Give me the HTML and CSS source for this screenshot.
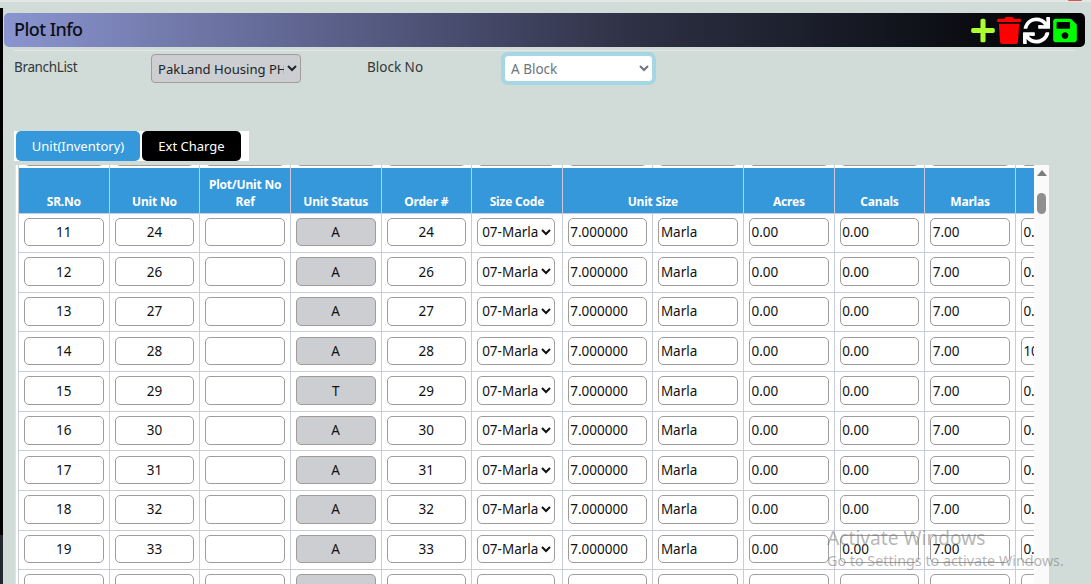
FILE: index.html
```html
<!DOCTYPE html>
<html lang="en">
<head>
<meta charset="utf-8">
<title>Plot Info</title>
<link rel="stylesheet" href="styles.css">
</head>
<body>
<div class="top-edge"><span class="top-dot"></span></div>
<div class="shell">
  <div class="edge"></div>
  <main class="main">
    <header class="title-bar">
      <h1 class="title">Plot Info</h1>
      <div class="tools">
        <svg class="ico ico-plus" viewBox="0 0 448 512"><path d="M416 208H272V64c0-17.67-14.33-32-32-32h-32c-17.67 0-32 14.33-32 32v144H32c-17.67 0-32 14.33-32 32v32c0 17.67 14.33 32 32 32h144v144c0 17.67 14.33 32 32 32h32c17.67 0 32-14.33 32-32V304h144c17.67 0 32-14.33 32-32v-32c0-17.67-14.33-32-32-32z"/></svg>
        <svg class="ico ico-trash" viewBox="0 0 448 512"><path d="M432 32H312l-9.4-18.7A24 24 0 0 0 281.1 0H166.8a23.72 23.72 0 0 0-21.4 13.3L136 32H16A16 16 0 0 0 0 48v32a16 16 0 0 0 16 16h416a16 16 0 0 0 16-16V48a16 16 0 0 0-16-16zM53.2 467a48 48 0 0 0 47.9 45h245.8a48 48 0 0 0 47.9-45L416 128H32z"/></svg>
        <svg class="ico ico-sync" viewBox="0 0 512 512"><path d="M440.65 12.57l4 82.77A247.16 247.16 0 0 0 255.83 8C134.73 8 33.91 94.92 12.29 209.82A12 12 0 0 0 24.09 224h49.05a12 12 0 0 0 11.67-9.26 175.91 175.91 0 0 1 317-56.94l-101.46-4.86a12 12 0 0 0-12.57 12v47.41a12 12 0 0 0 12 12H500a12 12 0 0 0 12-12V12a12 12 0 0 0-12-12h-47.37a12 12 0 0 0-11.98 12.57zM255.83 432a175.61 175.61 0 0 1-146-77.8l101.8 4.87a12 12 0 0 0 12.57-12v-47.4a12 12 0 0 0-12-12H12a12 12 0 0 0-12 12V500a12 12 0 0 0 12 12h47.35a12 12 0 0 0 12-12.6l-4.15-82.57A247.17 247.17 0 0 0 255.83 504c121.11 0 221.93-86.92 243.55-201.82a12 12 0 0 0-11.8-14.18h-49.05a12 12 0 0 0-11.67 9.26A175.86 175.86 0 0 1 255.83 432z"/></svg>
        <svg class="ico ico-save" viewBox="0 0 448 512"><path d="M433.941 129.941l-83.882-83.882A48 48 0 0 0 316.118 32H48C21.49 32 0 53.49 0 80v352c0 26.51 21.49 48 48 48h352c26.51 0 48-21.49 48-48V163.882a48 48 0 0 0-14.059-33.941zM224 416c-35.346 0-64-28.654-64-64 0-35.346 28.654-64 64-64s64 28.654 64 64c0 35.346-28.654 64-64 64zm96-304.52V212c0 6.627-5.373 12-12 12H76c-6.627 0-12-5.373-12-12V108c0-6.627 5.373-12 12-12h228.52c3.183 0 6.235 1.264 8.485 3.515l3.48 3.48A11.996 11.996 0 0 1 320 111.48z"/></svg>
      </div>
    </header>
    <hr class="rule">
    <section class="filters">
      <label class="lbl lbl-branch">BranchList</label>
      <select class="branch-select"><option>PakLand Housing PH-1</option></select>
      <label class="lbl lbl-block">Block No</label>
      <select class="block-select"><option>A Block</option></select>
    </section>
    <nav class="tabs">
      <button class="tab tab-active">Unit(Inventory)</button>
      <button class="tab tab-dark">Ext Charge</button>
    </nav>
    <section class="panel">
      <div class="view">
        <table class="grid">
          <colgroup><col class="c"><col class="c"><col class="c"><col class="c"><col class="c"><col class="c"><col class="c"><col class="c"><col class="c"><col class="c"><col class="c"><col class="c"></colgroup>
          <tbody>
            <tr class="row cut"><td><input class="f ctr"></td><td><input class="f ctr"></td><td><input class="f ctr"></td><td><input class="f ctr st"></td><td><input class="f ctr"></td><td><input class="f sz"></td><td><input class="f"></td><td><input class="f"></td><td><input class="f"></td><td><input class="f"></td><td><input class="f"></td><td><input class="f"></td></tr>
            <tr class="head"><th>SR.No</th><th>Unit No</th><th>Plot/Unit No<br>Ref</th><th>Unit Status</th><th>Order #</th><th>Size Code</th><th colspan="2">Unit Size</th><th>Acres</th><th>Canals</th><th>Marlas</th><th>Square Ft</th></tr>
            <tr class="row"><td><input class="f ctr" value="11"></td><td><input class="f ctr" value="24"></td><td><input class="f ctr"></td><td><input class="f ctr st" value="A"></td><td><input class="f ctr" value="24"></td><td><select class="f sz"><option>07-Marla</option></select></td><td><input class="f" value="7.000000"></td><td><input class="f" value="Marla"></td><td><input class="f" value="0.00"></td><td><input class="f" value="0.00"></td><td><input class="f" value="7.00"></td><td><input class="f" value="0.00"></td></tr>
            <tr class="row"><td><input class="f ctr" value="12"></td><td><input class="f ctr" value="26"></td><td><input class="f ctr"></td><td><input class="f ctr st" value="A"></td><td><input class="f ctr" value="26"></td><td><select class="f sz"><option>07-Marla</option></select></td><td><input class="f" value="7.000000"></td><td><input class="f" value="Marla"></td><td><input class="f" value="0.00"></td><td><input class="f" value="0.00"></td><td><input class="f" value="7.00"></td><td><input class="f" value="0.00"></td></tr>
            <tr class="row"><td><input class="f ctr" value="13"></td><td><input class="f ctr" value="27"></td><td><input class="f ctr"></td><td><input class="f ctr st" value="A"></td><td><input class="f ctr" value="27"></td><td><select class="f sz"><option>07-Marla</option></select></td><td><input class="f" value="7.000000"></td><td><input class="f" value="Marla"></td><td><input class="f" value="0.00"></td><td><input class="f" value="0.00"></td><td><input class="f" value="7.00"></td><td><input class="f" value="0.00"></td></tr>
            <tr class="row"><td><input class="f ctr" value="14"></td><td><input class="f ctr" value="28"></td><td><input class="f ctr"></td><td><input class="f ctr st" value="A"></td><td><input class="f ctr" value="28"></td><td><select class="f sz"><option>07-Marla</option></select></td><td><input class="f" value="7.000000"></td><td><input class="f" value="Marla"></td><td><input class="f" value="0.00"></td><td><input class="f" value="0.00"></td><td><input class="f" value="7.00"></td><td><input class="f" value="10.00"></td></tr>
            <tr class="row"><td><input class="f ctr" value="15"></td><td><input class="f ctr" value="29"></td><td><input class="f ctr"></td><td><input class="f ctr st" value="T"></td><td><input class="f ctr" value="29"></td><td><select class="f sz"><option>07-Marla</option></select></td><td><input class="f" value="7.000000"></td><td><input class="f" value="Marla"></td><td><input class="f" value="0.00"></td><td><input class="f" value="0.00"></td><td><input class="f" value="7.00"></td><td><input class="f" value="0.00"></td></tr>
            <tr class="row"><td><input class="f ctr" value="16"></td><td><input class="f ctr" value="30"></td><td><input class="f ctr"></td><td><input class="f ctr st" value="A"></td><td><input class="f ctr" value="30"></td><td><select class="f sz"><option>07-Marla</option></select></td><td><input class="f" value="7.000000"></td><td><input class="f" value="Marla"></td><td><input class="f" value="0.00"></td><td><input class="f" value="0.00"></td><td><input class="f" value="7.00"></td><td><input class="f" value="0.00"></td></tr>
            <tr class="row"><td><input class="f ctr" value="17"></td><td><input class="f ctr" value="31"></td><td><input class="f ctr"></td><td><input class="f ctr st" value="A"></td><td><input class="f ctr" value="31"></td><td><select class="f sz"><option>07-Marla</option></select></td><td><input class="f" value="7.000000"></td><td><input class="f" value="Marla"></td><td><input class="f" value="0.00"></td><td><input class="f" value="0.00"></td><td><input class="f" value="7.00"></td><td><input class="f" value="0.00"></td></tr>
            <tr class="row"><td><input class="f ctr" value="18"></td><td><input class="f ctr" value="32"></td><td><input class="f ctr"></td><td><input class="f ctr st" value="A"></td><td><input class="f ctr" value="32"></td><td><select class="f sz"><option>07-Marla</option></select></td><td><input class="f" value="7.000000"></td><td><input class="f" value="Marla"></td><td><input class="f" value="0.00"></td><td><input class="f" value="0.00"></td><td><input class="f" value="7.00"></td><td><input class="f" value="0.00"></td></tr>
            <tr class="row"><td><input class="f ctr" value="19"></td><td><input class="f ctr" value="33"></td><td><input class="f ctr"></td><td><input class="f ctr st" value="A"></td><td><input class="f ctr" value="33"></td><td><select class="f sz"><option>07-Marla</option></select></td><td><input class="f" value="7.000000"></td><td><input class="f" value="Marla"></td><td><input class="f" value="0.00"></td><td><input class="f" value="0.00"></td><td><input class="f" value="7.00"></td><td><input class="f" value="0.00"></td></tr>
            <tr class="row"><td><input class="f ctr"></td><td><input class="f ctr"></td><td><input class="f ctr"></td><td><input class="f ctr st"></td><td><input class="f ctr"></td><td><input class="f sz"></td><td><input class="f"></td><td><input class="f"></td><td><input class="f"></td><td><input class="f"></td><td><input class="f"></td><td><input class="f"></td></tr>
          </tbody>
        </table>
      </div>
      <div class="scrollbar"><span class="arrow"></span><span class="thumb"></span></div>
    </section>
  </main>
</div>
<div class="watermark"><div class="wm-a">Activate Windows</div><div class="wm-b">Go to Settings to activate Windows.</div></div>
</body>
</html>
```
FILE: styles.css
```css
* { box-sizing: border-box; }
html, body { margin: 0; height: 584px; overflow: hidden; }
body { background: #d1dcd8; font-family: "Noto Sans", "Open Sans", sans-serif; font-size: 13.5px; color: #212529; position: relative; }
.top-edge { height: 2px; background: #e3e7e7; position: relative; }
.top-dot { position: absolute; left: 1068px; top: 0; width: 14px; height: 1px; background: #d9534f; border-radius: 0 0 7px 7px; }
.shell { display: flex; height: 582px; }
.edge { width: 3px; margin-top: 6px; background: linear-gradient(#000 0, #000 91.5%, #23282c 91.5%); }
.main { flex: 1; padding: 11px 6px 0 1px; min-width: 0; }
.title-bar { height: 34px; display: flex; align-items: center; justify-content: space-between; border-radius: 5px; padding: 0 8px 0 10px; background: linear-gradient(to right, #8a94cf 0, #6f76a6 18%, #50557a 37%, #2f3145 58%, #171a25 78%, #000 100%); }
.title { margin: 0 0 2px; font-size: 18px; font-weight: 500; color: #0c0f18; line-height: 1; letter-spacing: -.55px; }
.tools { display: flex; align-items: center; gap: 2px; }
.ico { height: 27px; display: block; }
.ico-plus { width: 24px; fill: #adff2f; }
.ico-trash { width: 24px; fill: #ff0000; }
.ico-sync { width: 27px; fill: #fff; }
.ico-save { width: 24px; fill: #00ff00; margin-left: 1px; }
.rule { margin: 3px 10px 0; border: 0; border-top: 1px solid #e3e9e7; height: 0; }
.filters { height: 80px; display: flex; align-items: flex-start; padding: 3px 0 0 10px; }
.lbl { line-height: 20px; color: #33373b; margin-top: 3px; }
.lbl-branch { width: 137px; letter-spacing: -.35px; }
.lbl-block { margin-left: 66px; width: 137px; }
.branch-select { width: 150px; height: 29px; font: inherit; font-size: 13.1px; padding: 0 0 0 2px; background: #ccced2; border: 1px solid #a09c9c; border-radius: 4px; color: #212529; }
.block-select { width: 149px; height: 27px; margin-top: 1px; font: inherit; padding: 0 0 0 2px; background: #fff; color: #6c757d; border: 1px solid #a4d6e3; border-radius: 4px; box-shadow: 0 0 0 3px #a4d6e3; }
.tabs { display: inline-flex; gap: 2px; height: 30px; margin-left: 10px; padding: 0 8px 0 2px; background: #fff; vertical-align: top; }
.tab { height: 30px; border: 0; border-radius: 5px; font: inherit; font-size: 13px; color: #fff; padding: 0; }
.tab-active { width: 124px; background: #3498db; }
.tab-dark { width: 99px; background: #000; }
.panel { display: flex; width: 1034px; height: 419px; margin: 4px 0 0 11px; background: #fff; border-left: 1px solid #dfe3e3; }
.view { flex: 1; min-width: 0; overflow: hidden; padding-left: 2px; }
.grid { border-collapse: collapse; table-layout: fixed; width: 1087.7px; margin-top: -36.6px; }
.c { width: 90.64px; }
.row { height: 39.64px; }
.row td { border: 1px solid #c8ccd6; padding: 0 5px 1.5px 5px; vertical-align: middle; }
.cut td { padding-bottom: 2px; vertical-align: bottom; border-top: 0; border-bottom: 0; }
.head { height: 45px; }
.head th { background: #3498db; color: #fff; font-size: 12px; font-weight: 700; line-height: 17.5px; letter-spacing: -.2px; vertical-align: bottom; padding: 0 2px 2px; border: 1px solid #c8ccd6; border-top: 0; text-align: center; white-space: nowrap; }
.f { display: block; width: 100%; height: 28.6px; border: 1px solid #a09c9c; border-radius: 5px; background: #fff; font: inherit; color: #111; padding: 0 1.5px; }
.ctr { text-align: center; }
.st { background: #ccced2; }
.sz { width: 78px; padding: 0; }
.scrollbar { width: 15px; background: #fafafa; display: flex; flex-direction: column; align-items: center; }
.arrow { margin-top: 5px; border: 5px solid transparent; border-top: 0; border-bottom: 6px solid #7d7d7d; }
.thumb { width: 9px; height: 21px; margin-top: 17px; background: #8f8f8f; border-radius: 5px; }
.watermark { position: absolute; left: 827px; top: 526px; color: rgba(110, 110, 110, .5); white-space: nowrap; }
.wm-a { font-size: 19.2px; line-height: 24px; }
.wm-b { font-size: 14.3px; line-height: 22px; }
```
